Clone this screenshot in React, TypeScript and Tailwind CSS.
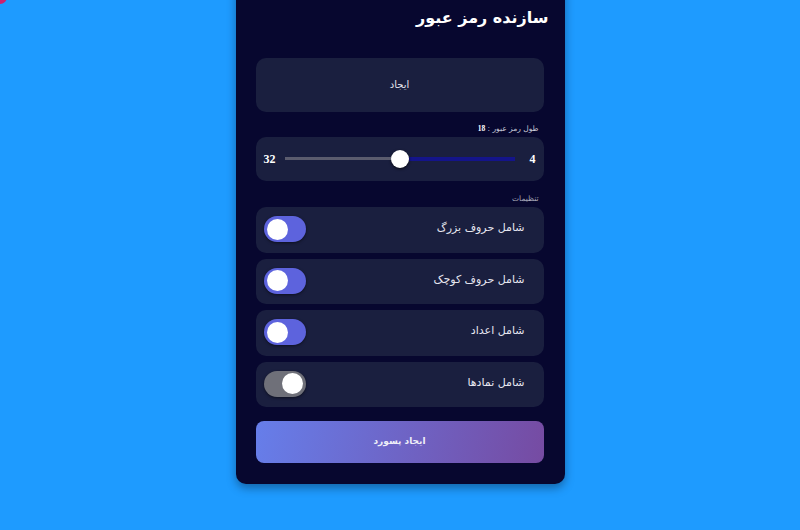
const options = [
  { label: "شامل حروف بزرگ", on: true },
  { label: "شامل حروف کوچک", on: true },
  { label: "شامل اعداد", on: true },
  { label: "شامل نمادها", on: false },
];

function Toggle({ on }: { on: boolean }) {
  return (
    <div
      className={`w-[42px] h-[26px] rounded-full flex items-center px-[3px] shadow-[0_1px_3px_rgba(0,0,0,0.5)] ${
        on ? "bg-[#5d63dd] justify-end" : "bg-[#6f7079] justify-start"
      }`}
    >
      <div className="w-[21px] h-[21px] rounded-full bg-white" />
    </div>
  );
}

export default function App() {
  return (
    <div
      className="relative h-[530px] w-[800px] overflow-hidden bg-[#1e9bff] flex flex-col items-center justify-end pb-[46px] font-['DejaVu_Sans',sans-serif]"
      dir="rtl"
    >
      {/* corner blob */}
      <div className="absolute -top-[5px] left-0 w-[7px] h-[9px] rounded-br-full bg-[#d0206e]" />

      <div className="w-[329px] rounded-[10px] bg-[#07072f] pt-5 pl-5 pr-[21px] pb-[21px] shadow-[0_4px_10px_rgba(0,0,0,0.35)]">
        <h1 className="-mr-[5px] h-[58px] pt-[3px] text-[16px] leading-[30px] font-bold text-white">
          سازنده رمز عبور
        </h1>

        <div className="h-[54px] rounded-[10px] bg-[#1a1f3f] flex items-center justify-center pb-[2px] text-[10px] text-[#e4e4ee]">
          ایجاد
        </div>

        <p className="h-[25px] pt-[11px] pr-[5px] text-[7.5px] leading-[12px] text-[#c9cad8]">
          طول رمز عبور : <b className="font-['Liberation_Serif',serif] text-white">18</b>
        </p>

        <div className="h-[44px] rounded-[10px] bg-[#1a1f3f] flex items-center pr-[5px] pl-2 pb-[1px] gap-[6px] font-['Liberation_Serif',serif] font-bold text-[12px] text-white">
          <span className="w-[12px] text-center">4</span>
          <div className="flex items-center mr-[6px]">
            <div className="w-[106px] h-[4px] bg-[#14148a]" />
            <div className="w-[18px] h-[18px] rounded-full bg-white shadow-[0_1px_3px_rgba(0,0,0,0.7)]" />
            <div className="w-[106px] h-[3px] bg-[#5b5c6e]" />
          </div>
          <span className="w-[12px] mr-[3px] text-center">32</span>
        </div>

        <p className="h-[26px] pt-[12px] pr-[5px] text-[7.5px] leading-[12px] text-[#a9aaba]">
          تنظیمات
        </p>

        <div className="flex flex-col gap-[6px]">
          {options.map((o) => (
            <div
              key={o.label}
              className="h-[45.5px] rounded-[10px] bg-[#1a1f3f] flex items-center justify-between pr-[19px] pl-2 pb-[1px] text-[11px] text-[#e6e6f0]"
            >
              <span className="pb-[2px]">{o.label}</span>
              <Toggle on={o.on} />
            </div>
          ))}
        </div>

        <button className="mt-[14px] w-full h-[42px] rounded-[8px] bg-[linear-gradient(100deg,#667eea,#764ba2)] text-[9px] font-bold text-[#eeeef8] flex items-center justify-center">
          ایجاد پسورد
        </button>
      </div>
    </div>
  );
}
